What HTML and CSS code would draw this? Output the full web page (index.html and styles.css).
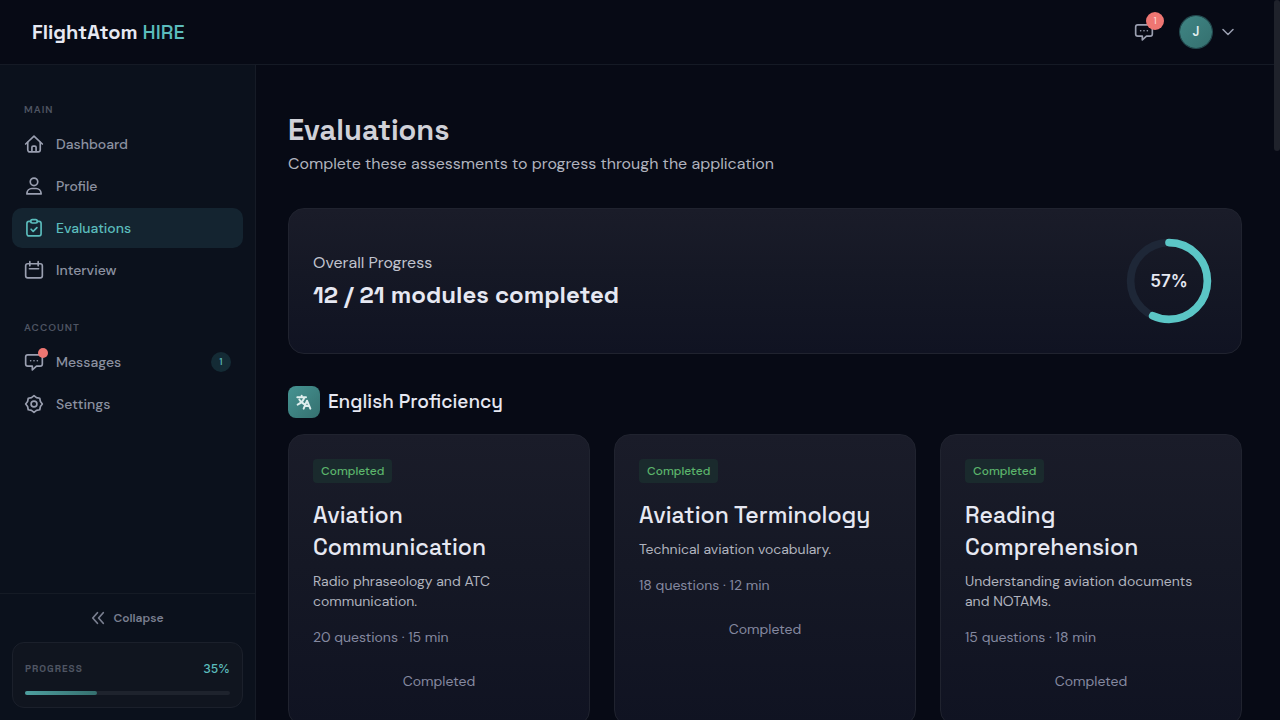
FILE: index.html
```html
<!DOCTYPE html>
<html lang="en">
<head>
  <meta charset="UTF-8" />
  <meta name="viewport" content="width=device-width, initial-scale=1.0" />
  <title>Evaluations - FlightAtom HIRE</title>
  <link rel="stylesheet" href="styles.css">
</head>
<body>
  <header class="topbar">
    <a class="brand" href="#">FlightAtom <span>HIRE</span></a>
    <div class="topbar-actions">
      <button class="icon-btn" type="button" aria-label="Notifications">
        <svg class="icon" viewBox="0 0 24 24"><path d="M4.500 3.500h15A2.500 2.500 0 0 1 22 6v8.500a2.500 2.500 0 0 1-2.500 2.500H15l-5 4.500V17H4.500A2.500 2.500 0 0 1 2 14.500V6a2.500 2.500 0 0 1 2.500-2.500z"/><path d="M8 10.500h.01M12 10.500h.01M16 10.500h.01"/></svg>
        <span class="count">1</span>
      </button>
      <button class="user-btn" type="button" aria-label="Account menu">
        <span class="avatar">J</span>
        <svg class="chevron" viewBox="0 0 24 24"><path d="M2 7l10 10L22 7"/></svg>
      </button>
    </div>
  </header>

  <div class="layout">
    <aside class="sidebar">
      <nav class="nav">
        <h2 class="nav-label">Main</h2>
        <a class="nav-item" href="#">
          <svg class="icon" viewBox="0 0 24 24"><path d="M2 12l10-9.500L22 12"/><path d="M4.500 10v9a2.500 2.500 0 0 0 2.500 2.500h10a2.500 2.500 0 0 0 2.500-2.500v-9"/><path d="M9.500 21v-5a1.500 1.500 0 0 1 1.500-1.500h2a1.500 1.500 0 0 1 1.500 1.500v5"/></svg>
          Dashboard
        </a>
        <a class="nav-item" href="#">
          <svg class="icon" viewBox="0 0 24 24"><circle cx="12" cy="7" r="4.500"/><path d="M3.500 21.500v-1a6 6 0 0 1 6-5.500h5a6 6 0 0 1 6 5.500v1z"/></svg>
          Profile
        </a>
        <a class="nav-item active" href="#">
          <svg class="icon" viewBox="0 0 24 24"><path d="M8 4H6a2.500 2.500 0 0 0-2.500 2.500V19A2.500 2.500 0 0 0 6 21.500h12a2.500 2.500 0 0 0 2.500-2.500V6.500A2.500 2.500 0 0 0 18 4h-2"/><rect x="8" y="2" width="8" height="4" rx="2"/><path d="M8.500 13.500l2.500 2.500 4.500-4.500"/></svg>
          Evaluations
        </a>
        <a class="nav-item" href="#">
          <svg class="icon" viewBox="0 0 24 24"><rect x="2" y="4.500" width="20" height="17" rx="2.500"/><path d="M7 2v5M17 2v5M6.500 10.500h11"/></svg>
          Interview
        </a>

        <h2 class="nav-label">Account</h2>
        <a class="nav-item" href="#">
          <span class="icon-wrap">
            <svg class="icon" viewBox="0 0 24 24"><path d="M4.500 3.500h15A2.500 2.500 0 0 1 22 6v8.500a2.500 2.500 0 0 1-2.500 2.500H15l-5 4.500V17H4.500A2.500 2.500 0 0 1 2 14.500V6a2.500 2.500 0 0 1 2.500-2.500z"/><path d="M8 10.500h.01M12 10.500h.01M16 10.500h.01"/></svg>
            <span class="dot"></span>
          </span>
          Messages
          <span class="badge">1</span>
        </a>
        <a class="nav-item" href="#">
          <svg class="icon" viewBox="0 0 24 24"><path d="M12 2l3 2.300 3.900.8.800 3.900L22 12l-2.300 3-.8 3.900-3.900.8L12 22l-3-2.300-3.900-.8-.8-3.900L2 12l2.300-3 .8-3.900L9 4.300z"/><circle cx="12" cy="12" r="3.500"/></svg>
          Settings
        </a>
      </nav>

      <div class="sidebar-footer">
        <button class="collapse" type="button">
          <svg class="collapse-icon" viewBox="0 0 24 24"><path d="M11 3l-8 9 8 9M21 3l-8 9 8 9"/></svg>
          Collapse
        </button>
        <div class="mini-progress">
          <div class="mini-head">
            <span class="mini-label">Progress</span>
            <span class="mini-value">35%</span>
          </div>
          <div class="mini-track"><div class="mini-fill" style="width: 35%"></div></div>
        </div>
      </div>
    </aside>

    <main class="content">
      <h1>Evaluations</h1>
      <p class="subtitle">Complete these assessments to progress through the application</p>

      <section class="card overall">
        <div>
          <p class="overall-label">Overall Progress</p>
          <p class="overall-value">12 / 21 modules completed</p>
        </div>
        <div class="ring">
          <svg viewBox="0 0 100 100">
            <circle class="ring-track" cx="50" cy="50" r="40"/>
            <circle class="ring-fill" cx="50" cy="50" r="40" pathLength="100" stroke-dasharray="57 100" transform="rotate(-90 50 50)"/>
          </svg>
          <span class="ring-text">57%</span>
        </div>
      </section>

      <section>
        <div class="section-head">
          <span class="section-icon">
            <svg viewBox="0 0 24 24"><path d="M2 5h13M8.500 2.500V5M12.500 5c-1 4.500-4.500 8.500-10 11M5 8.500c1.500 3 4 5 7 6.500M11.500 22l5-12 5 12M13.200 18h6.600"/></svg>
          </span>
          <h2>English Proficiency</h2>
        </div>

        <div class="grid">
          <article class="card module">
            <span class="status">Completed</span>
            <h3>Aviation Communication</h3>
            <p class="desc">Radio phraseology and ATC communication.</p>
            <p class="meta">20 questions · 15 min</p>
            <button class="done" type="button" disabled>Completed</button>
          </article>
          <article class="card module">
            <span class="status">Completed</span>
            <h3>Aviation Terminology</h3>
            <p class="desc">Technical aviation vocabulary.</p>
            <p class="meta">18 questions · 12 min</p>
            <button class="done" type="button" disabled>Completed</button>
          </article>
          <article class="card module">
            <span class="status">Completed</span>
            <h3>Reading Comprehension</h3>
            <p class="desc">Understanding aviation documents and NOTAMs.</p>
            <p class="meta">15 questions · 18 min</p>
            <button class="done" type="button" disabled>Completed</button>
          </article>
        </div>
      </section>
    </main>
  </div>

  <div class="scrollbar"></div>
</body>
</html>
```
FILE: styles.css
```css
* {
  box-sizing: border-box;
}
body {
  margin: 0;
  height: 100vh;
  padding-right: 6px;
  display: flex;
  flex-direction: column;
  overflow: hidden;
  background: #070a15;
  color: #e6e8f2;
  font-family: "DM Sans", Inter, sans-serif;
  font-size: 14px;
  line-height: 20px;
}
h1, h2, h3, p {
  margin: 0;
}
h1, h2, h3, .brand, .overall-value {
  font-family: "Space Grotesk", Inter, sans-serif;
}
a {
  color: inherit;
  text-decoration: none;
}
button {
  padding: 0;
  border: 0;
  background: none;
  color: inherit;
  font: inherit;
  cursor: pointer;
}
svg {
  display: block;
  fill: none;
  stroke: currentColor;
  stroke-width: 2;
  stroke-linecap: round;
  stroke-linejoin: round;
}
.icon {
  width: 20px;
  height: 20px;
  flex-shrink: 0;
}

/* top bar */
.topbar {
  height: 65px;
  flex-shrink: 0;
  padding: 0 40px 0 32px;
  display: flex;
  align-items: center;
  justify-content: space-between;
  border-bottom: 1px solid #151a25;
}
.brand {
  font-size: 20px;
  font-weight: 600;
}
.brand span {
  color: #5bbcbc;
  font-weight: 500;
}
.topbar-actions {
  display: flex;
  align-items: center;
  gap: 26px;
  color: #9a9fb0;
}
.icon-btn {
  position: relative;
}
.count {
  position: absolute;
  top: -10px;
  right: -10px;
  width: 18px;
  height: 18px;
  border-radius: 50%;
  background: #ee7672;
  color: #fbdcda;
  font-size: 10px;
  line-height: 18px;
  text-align: center;
}
.user-btn {
  display: flex;
  align-items: center;
  gap: 10px;
}
.avatar {
  width: 32px;
  height: 32px;
  border-radius: 50%;
  background: linear-gradient(135deg, #3f8584, #35706f);
  box-shadow: 0 0 0 1px #234b50;
  color: #e2efee;
  font-size: 13px;
  font-weight: 600;
  line-height: 32px;
}
.chevron {
  width: 12px;
  height: 12px;
  stroke-width: 3;
}

.layout {
  flex: 1;
  min-height: 0;
  display: flex;
}

/* sidebar */
.sidebar {
  width: 256px;
  flex-shrink: 0;
  display: flex;
  flex-direction: column;
  justify-content: space-between;
  background: #0b111c;
  border-right: 1px solid #161b26;
  color: #8c91a1;
}
.nav {
  padding: 9px 12px 0;
  display: flex;
  flex-direction: column;
  gap: 2px;
}
.nav-label {
  margin: 28px 0 4px 12px;
  color: #4f5563;
  font-family: "DM Sans", Inter, sans-serif;
  font-size: 10px;
  font-weight: 600;
  letter-spacing: 1px;
  line-height: 16px;
  text-transform: uppercase;
}
.nav-item {
  height: 40px;
  padding: 0 12px;
  display: flex;
  align-items: center;
  gap: 12px;
  border-radius: 10px;
  font-weight: 500;
}
.nav-item.active {
  background: #142430;
  color: #5bbcbc;
}
.nav-item .icon {
  color: #9a9fb0;
}
.nav-item.active .icon {
  color: #5bbcbc;
}
.icon-wrap {
  position: relative;
}
.dot {
  position: absolute;
  top: -4px;
  right: -4px;
  width: 10px;
  height: 10px;
  border-radius: 50%;
  background: #ee7672;
}
.badge {
  width: 20px;
  height: 20px;
  margin-left: auto;
  border-radius: 50%;
  background: #142b35;
  color: #5bbcbc;
  font-size: 10px;
  text-align: center;
}
.sidebar-footer {
  padding: 8px 12px 12px;
  border-top: 1px solid #151b25;
}
.collapse {
  width: 100%;
  height: 32px;
  margin-bottom: 8px;
  display: flex;
  align-items: center;
  justify-content: center;
  gap: 8px;
  color: #797e8f;
  font-size: 12px;
  font-weight: 600;
}
.collapse-icon {
  width: 14px;
  height: 14px;
  stroke-width: 3;
}
.mini-progress {
  padding: 16px 12px 12px;
  border: 1px solid #1b202b;
  border-radius: 12px;
  background: #10151f;
}
.mini-head {
  margin-bottom: 12px;
  display: flex;
  justify-content: space-between;
}
.mini-label {
  color: #4f5563;
  font-family: "Space Grotesk", Inter, sans-serif;
  font-size: 10px;
  font-weight: 600;
  letter-spacing: 1px;
  text-transform: uppercase;
}
.mini-value {
  color: #5bbcbc;
  font-family: Inter, sans-serif;
  font-size: 12px;
  font-weight: 500;
}
.mini-track {
  height: 4px;
  border-radius: 2px;
  background: #1e232d;
}
.mini-fill {
  height: 4px;
  border-radius: 2px;
  background: linear-gradient(90deg, #4e9f9f, #35706f);
}

/* content */
.content {
  flex: 1;
  min-width: 0;
  padding: 47px 32px 0;
  overflow: hidden;
}
h1 {
  color: #d0d1d8;
  font-size: 29px;
  font-weight: 600;
  line-height: 36px;
}
.subtitle {
  margin-top: 4px;
  color: #b0b3be;
  font-size: 16px;
  line-height: 24px;
}
.card {
  padding: 24px;
  border: 1px solid #20232f;
  border-radius: 16px;
  background: linear-gradient(180deg, #1a1c29, #151825 45%, #101322);
}
.overall {
  margin-top: 32px;
  display: flex;
  align-items: center;
  justify-content: space-between;
}
.overall-label {
  color: #c0c3ce;
  font-size: 16px;
  line-height: 24px;
}
.overall-value {
  margin-top: 4px;
  font-size: 24px;
  font-weight: 600;
  line-height: 32px;
}
.ring {
  width: 96px;
  height: 96px;
  display: grid;
  place-items: center;
}
.ring svg, .ring-text {
  grid-area: 1 / 1;
}
.ring svg {
  width: 96px;
  height: 96px;
  stroke-width: 8;
}
.ring-track {
  stroke: #1e2737;
}
.ring-fill {
  stroke: #5bc6c6;
}
.ring-text {
  font-family: Inter, sans-serif;
  font-size: 17px;
  font-weight: 600;
}
.section-head {
  margin: 32px 0 16px;
  display: flex;
  align-items: center;
  gap: 8px;
}
.section-head h2 {
  font-size: 19px;
  font-weight: 500;
  line-height: 28px;
}
.section-icon {
  width: 32px;
  height: 32px;
  display: grid;
  place-items: center;
  border-radius: 8px;
  background: linear-gradient(135deg, #459392, #35706f);
  color: #dfeeee;
}
.section-icon svg {
  width: 16px;
  height: 16px;
  stroke-width: 3;
}
.grid {
  display: grid;
  grid-template-columns: repeat(3, 1fr);
  gap: 24px;
}
.module {
  display: flex;
  flex-direction: column;
  align-items: flex-start;
}
.status {
  padding: 2px 8px;
  border-radius: 4px;
  background: #1a2a2d;
  color: #5cb56c;
  font-size: 12px;
  font-weight: 500;
}
.module h3 {
  margin-top: 16px;
  font-size: 23px;
  font-weight: 500;
  line-height: 32px;
}
.desc {
  margin-top: 8px;
  color: #b0b3be;
}
.meta {
  margin-top: 16px;
  color: #8589a0;
}
.done {
  width: 100%;
  height: 40px;
  margin-top: 14px;
  color: #8589a0;
  cursor: default;
}

.scrollbar {
  position: fixed;
  top: 0;
  right: 0;
  width: 6px;
  height: 21vh;
  border-radius: 3px;
  background: #1f222b;
}
```
